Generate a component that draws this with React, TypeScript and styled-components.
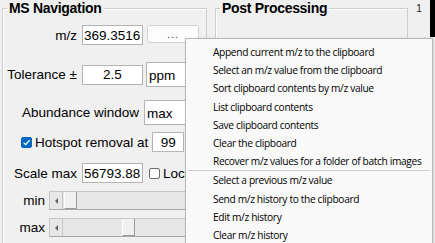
import React from "react";
import styled, { createGlobalStyle } from "styled-components";

const Global = createGlobalStyle`
  html, body {
    margin: 0;
    padding: 0;
    background: #f0f0f0;
  }
  body {
    font-family: "Liberation Sans", Arial, sans-serif;
    color: #000;
  }
`;

const Screen = styled.div`
  position: relative;
  width: 435px;
  height: 243px;
  overflow: hidden;
  background: #f0f0f0;
  display: flex;
  align-items: flex-start;
`;

const Panel = styled.fieldset<{ $w: number; $ml: number }>`
  box-sizing: border-box;
  margin: 0 0 0 ${(p) => p.$ml}px;
  padding: 0;
  width: ${(p) => p.$w}px;
  height: 280px;
  min-width: 0;
  border: 1px solid #cdcdcd;
  box-shadow: inset 1px 1px 0 #ffffff;
  flex-shrink: 0;
`;

const Title = styled.legend`
  margin-left: 4px;
  padding: 0 2px;
  font-weight: bold;
  font-size: 14px;
  line-height: 16px;
  letter-spacing: -0.3px;
`;

const Content = styled.div`
  display: flex;
  flex-direction: column;
`;

const Row = styled.div<{ $mt: number; $h: number; $pl?: number }>`
  display: flex;
  align-items: center;
  margin-top: ${(p) => p.$mt}px;
  height: ${(p) => p.$h}px;
  padding-left: ${(p) => p.$pl ?? 0}px;
  font-size: 13.5px;
`;

const Label = styled.span<{ $w: number; $gap: number }>`
  width: ${(p) => p.$w}px;
  margin-right: ${(p) => p.$gap}px;
  text-align: right;
  white-space: nowrap;
  flex-shrink: 0;
`;

const Field = styled.div<{ $w: number; $align?: string }>`
  box-sizing: border-box;
  width: ${(p) => p.$w}px;
  height: 20px;
  background: #ffffff;
  border: 1px solid #b4b4b4;
  padding: 0 1px;
  display: flex;
  align-items: center;
  justify-content: ${(p) => p.$align ?? "flex-start"};
  flex-shrink: 0;
  white-space: nowrap;
  overflow: hidden;
`;

const Dots = styled.div`
  box-sizing: border-box;
  width: 52px;
  height: 18px;
  margin-left: 4px;
  margin-top: -2px;
  background: #fdfdfd;
  border: 1px solid #d0d0d0;
  border-radius: 3px;
  display: flex;
  align-items: flex-end;
  justify-content: center;
  padding-bottom: 2px;
  font-size: 11px;
  letter-spacing: 1px;
  color: #444;
  flex-shrink: 0;
`;

const Drop = styled.div<{ $ml: number }>`
  box-sizing: border-box;
  height: 25px;
  flex: 1;
  margin-left: ${(p) => p.$ml}px;
  margin-right: 4px;
  background: #ffffff;
  border: 1px solid #b4b4b4;
  display: flex;
  align-items: center;
  padding-left: 2px;
  padding-top: 2px;
`;

const Check = styled.span<{ $on?: boolean }>`
  box-sizing: border-box;
  width: 11px;
  height: 11px;
  border-radius: 2px;
  flex-shrink: 0;
  display: flex;
  align-items: center;
  justify-content: center;
  background: ${(p) => (p.$on ? "#0067c0" : "#ffffff")};
  border: 1px solid ${(p) => (p.$on ? "#0067c0" : "#6b6b6b")};
`;

const PlainText = styled.span<{ $ml?: number; $mr?: number }>`
  margin-left: ${(p) => p.$ml ?? 0}px;
  margin-right: ${(p) => p.$mr ?? 0}px;
  white-space: nowrap;
  flex-shrink: 0;
`;

const Slider = styled.div`
  box-sizing: border-box;
  flex: 1;
  height: 19px;
  margin-right: 4px;
  display: flex;
  background: #e7e7e7;
  border: 1px solid #c6c6c6;
  border-bottom-color: #a8a8a8;
`;

const Arrow = styled.div`
  width: 12px;
  flex-shrink: 0;
  border-right: 1px solid #c6c6c6;
  display: flex;
  align-items: center;
  justify-content: center;
  &::before {
    content: "";
    border-top: 3px solid transparent;
    border-bottom: 3px solid transparent;
    border-right: 3px solid #606060;
  }
`;

const Thumb = styled.div<{ $at: number }>`
  box-sizing: border-box;
  width: 13px;
  margin-left: ${(p) => p.$at}px;
  flex-shrink: 0;
  background: #f0f0f0;
  border-left: 1px solid #ffffff;
  border-right: 1px solid #9a9a9a;
  border-bottom: 1px solid #9a9a9a;
`;

const Side = styled.div`
  width: 22px;
  flex-shrink: 0;
  display: flex;
  justify-content: center;
  padding-top: 3px;
  font-size: 10px;
  color: #222;
`;

const Strip = styled.div`
  width: 6px;
  height: 37px;
  background: #000;
  flex-shrink: 0;
`;

const Menu = styled.div`
  position: absolute;
  left: 185px;
  top: 38px;
  width: 248px;
  height: 220px;
  box-sizing: border-box;
  padding-top: 4px;
  background: #f9f9f9;
  border: 1px solid #b9b9b9;
  box-shadow: 1px 1px 3px rgba(0, 0, 0, 0.15);
  font-family: "Open Sans", "Noto Sans", sans-serif;
  font-size: 10.2px;
  letter-spacing: -0.35px;
`;

const Item = styled.div`
  height: 18.2px;
  line-height: 18.2px;
  padding-left: 27px;
  white-space: nowrap;
  color: #000;
`;

const Separator = styled.div`
  height: 1px;
  margin: 0 2px 0 2px;
  background: #cfcfcf;
`;

const firstItems = [
  "Append current m/z to the clipboard",
  "Select an m/z value from the clipboard",
  "Sort clipboard contents by m/z value",
  "List clipboard contents",
  "Save clipboard contents",
  "Clear the clipboard",
  "Recover m/z values for a folder of batch images",
];

const historyItems = [
  "Select a previous m/z value",
  "Send m/z history to the clipboard",
  "Edit m/z history",
  "Clear m/z history",
];

const App = () => {
  return (
    <Screen>
      <Global />
      <Panel $w={205} $ml={2}>
        <Title>MS Navigation</Title>
        <Content>
          <Row $mt={9} $h={20}>
            <Label $w={74} $gap={5}>m/z</Label>
            <Field $w={61}>369.3516</Field>
            <Dots>...</Dots>
          </Row>
          <Row $mt={17} $h={25}>
            <Label $w={74} $gap={5}>Tolerance ±</Label>
            <Field $w={61} $align="center">2.5</Field>
            <Drop $ml={3}>ppm</Drop>
          </Row>
          <Row $mt={13} $h={25}>
            <Label $w={136} $gap={5}>Abundance window</Label>
            <Drop $ml={0}>max</Drop>
          </Row>
          <Row $mt={7} $h={20} $pl={18}>
            <Check $on>
              <svg width="9" height="9" viewBox="0 0 9 9">
                <path d="M1.6 4.6 L3.6 6.6 L7.6 2.2" fill="none" stroke="#fff" strokeWidth="1.3" />
              </svg>
            </Check>
            <PlainText $ml={3} $mr={4}>Hotspot removal at</PlainText>
            <Field $w={32} $align="center">99</Field>
          </Row>
          <Row $mt={11} $h={20}>
            <Label $w={74} $gap={5}>Scale max</Label>
            <Field $w={61}>56793.88</Field>
            <Check style={{ marginLeft: 6 }} />
            <PlainText $ml={3}>Lock</PlainText>
          </Row>
          <Row $mt={8} $h={19}>
            <Label $w={42} $gap={4}>min</Label>
            <Slider>
              <Arrow />
              <Thumb $at={1} />
            </Slider>
          </Row>
          <Row $mt={8} $h={19}>
            <Label $w={42} $gap={4}>max</Label>
            <Slider>
              <Arrow />
              <Thumb $at={59} />
            </Slider>
          </Row>
        </Content>
      </Panel>
      <Panel $w={193} $ml={8}>
        <Title>Post Processing</Title>
      </Panel>
      <Side>1</Side>
      <Strip />
      <Menu>
        {firstItems.map((t) => (
          <Item key={t}>{t}</Item>
        ))}
        <Separator />
        {historyItems.map((t) => (
          <Item key={t}>{t}</Item>
        ))}
      </Menu>
    </Screen>
  );
};

export default App;
